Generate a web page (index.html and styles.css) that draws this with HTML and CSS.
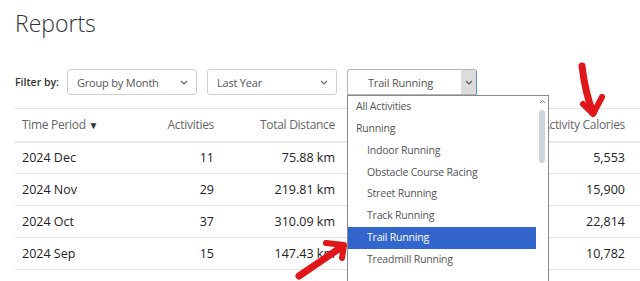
FILE: index.html
```html
<!DOCTYPE html>
<html>
<head>
<meta charset="utf-8">
<link rel="stylesheet" href="styles.css">
</head>
<body>
<div class="page">
  <h1 class="title">Reports</h1>
  <div class="filters">
    <span class="filter-label">Filter by:</span>
    <div class="select">
      <span class="select-text">Group by Month</span>
      <svg class="chev" width="8" height="5" viewBox="0 0 8 5"><path d="M1 1 L4 4 L7 1" fill="none" stroke="#666" stroke-width="1.2"/></svg>
    </div>
    <div class="select">
      <span class="select-text">Last Year</span>
      <svg class="chev" width="8" height="5" viewBox="0 0 8 5"><path d="M1 1 L4 4 L7 1" fill="none" stroke="#666" stroke-width="1.2"/></svg>
    </div>
    <div class="select select-open">
      <span class="select-text centered">Trail Running</span>
      <span class="arrow-box">
        <svg width="8" height="5" viewBox="0 0 8 5"><path d="M1 1 L4 4 L7 1" fill="none" stroke="#555" stroke-width="1.2"/></svg>
      </span>
      <div class="dropdown">
        <ul class="options">
          <li class="opt">All Activities</li>
          <li class="opt">Running</li>
          <li class="opt sub">Indoor Running</li>
          <li class="opt sub">Obstacle Course Racing</li>
          <li class="opt sub">Street Running</li>
          <li class="opt sub">Track Running</li>
          <li class="opt sub selected">Trail Running</li>
          <li class="opt sub">Treadmill Running</li>
        </ul>
        <div class="scrollbar">
          <svg class="scroll-up" width="7" height="5" viewBox="0 0 7 5"><path d="M1 4 L3.5 1.5 L6 4" fill="none" stroke="#888" stroke-width="1"/></svg>
          <div class="thumb"></div>
        </div>
      </div>
    </div>
  </div>
  <table class="report">
    <thead>
      <tr>
        <th class="c1">Time Period <span class="sort">&#9660;</span></th>
        <th class="c2">Activities</th>
        <th class="c3">Total Distance</th>
        <th class="c4"></th>
        <th class="c5">Activity Calories</th>
      </tr>
    </thead>
    <tbody>
      <tr><td class="c1">2024 Dec</td><td class="c2">11</td><td class="c3">75.88 km</td><td class="c4"></td><td class="c5">5,553</td></tr>
      <tr><td class="c1">2024 Nov</td><td class="c2">29</td><td class="c3">219.81 km</td><td class="c4"></td><td class="c5">15,900</td></tr>
      <tr><td class="c1">2024 Oct</td><td class="c2">37</td><td class="c3">310.09 km</td><td class="c4"></td><td class="c5">22,814</td></tr>
      <tr><td class="c1">2024 Sep</td><td class="c2">15</td><td class="c3">147.43 km</td><td class="c4"></td><td class="c5">10,782</td></tr>
    </tbody>
  </table>
</div>
<svg class="annot" width="640" height="281" viewBox="0 0 640 281">
  <g fill="none" stroke="#e0161b" stroke-linecap="round" stroke-linejoin="round">
    <path d="M582 66 Q585 92 593 113" stroke-width="7"/>
    <path d="M583 104 L593 114 L602 97" stroke-width="6"/>
    <path d="M299 276 L343 246" stroke-width="7"/>
    <path d="M326 243 L344 245 L342 258" stroke-width="6"/>
  </g>
</svg>
</body>
</html>
```

FILE: styles.css
```css
* { box-sizing: border-box; }
html, body { margin: 0; padding: 0; background: #fff; }
body {
  font-family: "Open Sans", "Noto Sans", sans-serif;
  color: #222;
  width: 640px;
  height: 281px;
  overflow: hidden;
  position: relative;
}
.page { padding: 8px 0 0 15px; }
.title {
  margin: 0;
  font-size: 23px;
  font-weight: 300;
  color: #333;
  line-height: 31px;
}
.filters {
  margin-top: 30px;
  display: flex;
  align-items: center;
  height: 26px;
}
.filter-label {
  font-size: 10.5px;
  font-weight: 600;
  color: #333;
  width: 52px;
}
.select {
  position: relative;
  width: 130px;
  height: 26px;
  border: 1px solid #cfcfcf;
  border-radius: 3px;
  margin-right: 10px;
  display: flex;
  align-items: center;
  padding: 0 8px 0 9px;
  font-size: 11px;
  letter-spacing: -0.2px;
  color: #555;
  background: #fff;
}
.select-text { flex: 1; }
.chev { display: block; }
.select-open {
  width: 130px;
  border-color: #b5b5b5;
  border-right-color: #5b8fd6;
  border-radius: 3px 3px 0 0;
  padding: 0;
}
.select-open .centered { padding-left: 20px; }
.arrow-box {
  width: 15px;
  height: 24px;
  background: #dcdcdc;
  display: flex;
  align-items: center;
  justify-content: center;
}
.dropdown {
  position: absolute;
  left: -1px;
  top: 25px;
  width: 202px;
  height: 200px;
  border: 1px solid #8a8a8a;
  background: #fff;
  z-index: 5;
  display: flex;
}
.options {
  list-style: none;
  margin: 0;
  padding: 0;
  flex: 1;
}
.opt {
  height: 21.85px;
  line-height: 21.85px;
  font-size: 10.5px;
  color: #555;
  padding-left: 8px;
  white-space: nowrap;
}
.opt.sub { padding-left: 19px; }
.opt.selected { background: #3366cc; color: #fff; }
.scrollbar {
  width: 12px;
  position: relative;
  display: flex;
  flex-direction: column;
  align-items: center;
  padding-top: 3px;
}
.scroll-up { display: block; }
.thumb {
  margin-top: 6px;
  width: 6px;
  height: 53px;
  border-radius: 3px;
  background: #ccd3dd;
}
.report {
  margin-top: 13px;
  border-collapse: collapse;
  width: 625px;
  table-layout: fixed;
  font-size: 12.5px;
}
.report th, .report td {
  height: 32px;
  padding: 0 7px;
  border-top: 1px solid #e3e3e3;
  border-bottom: 1px solid #e3e3e3;
  white-space: nowrap;
}
.report th {
  font-weight: 400;
  font-size: 12px;
  letter-spacing: -0.3px;
  color: #666;
  height: 33px;
  border-bottom: 2px solid #e6e6e6;
}
.report td { color: #222; }
.c1 { width: 120px; text-align: left; }
.c2 { width: 86px; text-align: right; }
.c3 { width: 121px; text-align: right; }
.c4 { width: 158px; text-align: right; }
.c5 { width: 140px; text-align: right; padding-right: 15px !important; }
.sort { font-size: 10px; color: #333; letter-spacing: 0; }
.annot {
  position: absolute;
  left: 0;
  top: 0;
  pointer-events: none;
  z-index: 10;
}
```
